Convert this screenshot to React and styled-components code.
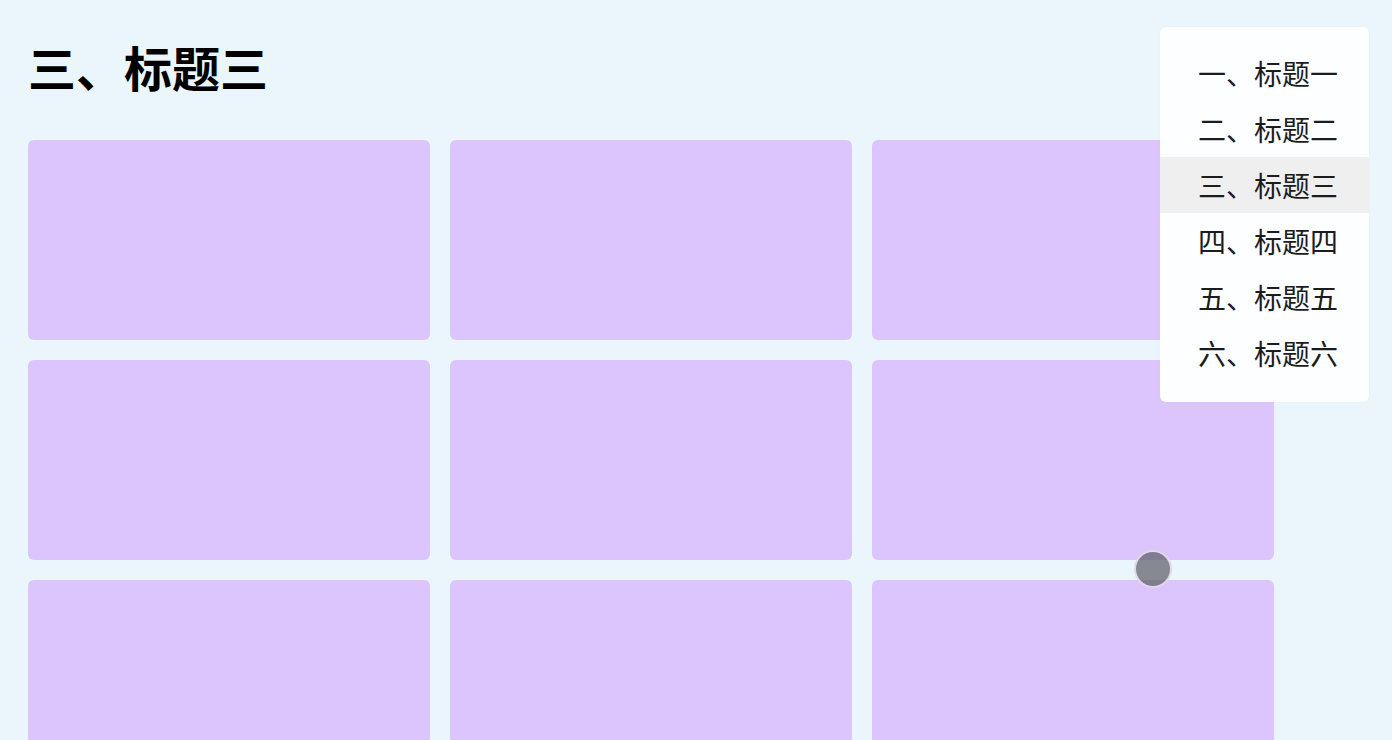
import React from "react";
import styled, { createGlobalStyle } from "styled-components";

const Global = createGlobalStyle`
  html, body { margin: 0; padding: 0; }
  body {
    background: #eaf5fc;
    font-family: "Noto Sans CJK SC", "Noto Sans", sans-serif;
    overflow: hidden;
  }
`;

const Page = styled.div`
  position: relative;
  width: 1392px;
  height: 740px;
  padding: 42px 28px 0;
  box-sizing: border-box;
  overflow: hidden;
`;

const Title = styled.h1`
  margin: 0 0 50px;
  font-size: 48px;
  line-height: 48px;
  font-weight: 700;
  color: #000;
`;

const Grid = styled.div`
  display: grid;
  grid-template-columns: repeat(3, 402px);
  grid-auto-rows: 200px;
  gap: 20px;
`;

const Card = styled.div`
  background: #dcc5fd;
  border-radius: 6px;
`;

const Menu = styled.nav`
  position: absolute;
  top: 27px;
  left: 1160px;
  width: 209px;
  padding: 18px 0 21px;
  background: #fdfeff;
  border-radius: 6px;
  box-sizing: border-box;
  box-shadow: 0 0 2px rgba(0, 0, 0, 0.03);
`;

const MenuItem = styled.div`
  height: 56px;
  display: flex;
  align-items: center;
  padding-left: 38px;
  font-size: 28px;
  color: #1c1c1c;
  background: ${(p) => (p.$active ? "#efefef" : "transparent")};
`;

const Touch = styled.div`
  position: absolute;
  left: 1134px;
  top: 550px;
  width: 38px;
  height: 38px;
  box-sizing: border-box;
  border-radius: 50%;
  background: rgba(95, 95, 105, 0.72);
  border: 2px solid rgba(248, 236, 255, 0.8);
`;

const items = ["一、标题一", "二、标题二", "三、标题三", "四、标题四", "五、标题五", "六、标题六"];

export default function App() {
  return (
    <>
      <Global />
      <Page>
        <Title>三、标题三</Title>
        <Grid>
          {Array.from({ length: 9 }).map((_, i) => (
            <Card key={i} />
          ))}
        </Grid>
        <Menu>
          {items.map((t, i) => (
            <MenuItem key={t} $active={i === 2}>
              {t}
            </MenuItem>
          ))}
        </Menu>
        <Touch />
      </Page>
    </>
  );
}
